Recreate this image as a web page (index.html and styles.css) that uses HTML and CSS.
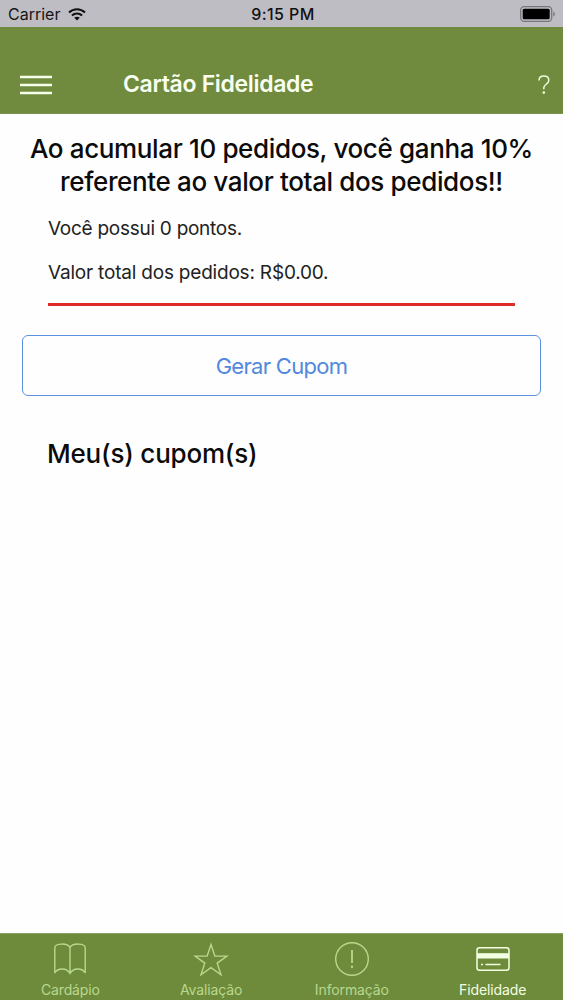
FILE: index.html
```html
<!DOCTYPE html>
<html lang="pt-BR">
<head>
<meta charset="utf-8">
<title>Cartão Fidelidade</title>
<link rel="stylesheet" href="styles.css">
</head>
<body>
<div class="app">
  <div class="status">
    <div class="carrier"><span>Carrier</span>
      <svg width="18" height="13" viewBox="0 0 18 13" fill="none" stroke="#111" stroke-width="2.1"><path d="M1 4.600C5.600.2 12.400.2 17 4.600M3.900 7.500c2.900-2.700 7.300-2.700 10.200 0"/><path d="M9 12.500 6.200 9.700c1.600-1.400 4-1.400 5.600 0z" fill="#111" stroke="none"/></svg>
    </div>
    <div class="clock">9:15 PM</div>
    <svg class="battery" width="36" height="16" viewBox="0 0 36 16"><rect x=".7" y=".7" width="31" height="14.600" rx="3.500" fill="none" stroke="#77777b" stroke-width="1.300"/><rect x="2.700" y="2.700" width="27" height="10.600" rx="1.500" fill="#000"/><path d="M33.300 5.500c2.100.8 2.100 4.200 0 5z" fill="#77777b"/></svg>
  </div>
  <header class="navbar">
    <svg class="menu" width="32" height="20" viewBox="0 0 32 20" stroke="#f6ffe9" stroke-width="2.300"><path d="M0 2h32M0 10h32M0 18h32"/></svg>
    <h1>Cartão Fidelidade</h1>
    <svg class="help" width="12" height="20" viewBox="0 0 12 20" fill="none" stroke="#effbdc" stroke-width="1.500"><path d="M1 5.500C1 2.500 3 1 5.800 1s5 1.600 5 4.200c0 4-5 4-5 7.600v1.400"/><circle cx="5.800" cy="17.600" r=".6" fill="#effbdc"/></svg>
  </header>
  <main>
    <h2 class="promo">Ao acumular 10 pedidos, você ganha 10%<br>referente ao valor total dos pedidos!!</h2>
    <section class="summary">
      <p class="points">Você possui 0 pontos.</p>
      <p class="total">Valor total dos pedidos: R$0.00.</p>
    </section>
    <button class="generate" type="button">Gerar Cupom</button>
    <h2 class="coupons">Meu(s) cupom(s)</h2>
  </main>
  <nav class="tabs">
    <div class="tab"><svg width="36" height="36" viewBox="0 0 36 36" fill="none" stroke="currentColor" stroke-width="1.400"><path d="M18 6.800C16 1.800 2.800 1.800 2.800 7v25c3-5.500 12-5.500 15.200.5C21.200 26.500 30.200 26.500 33.200 32V7C33.200 1.800 20 1.800 18 6.800zM18 6.800v25.700"/></svg><span class="label">Cardápio</span></div>
    <div class="tab"><svg width="36" height="36" viewBox="0 0 36 36" fill="none" stroke="currentColor" stroke-width="1.400"><path d="m18 3.500 3.900 11.600H34l-9.800 7 3.800 11.700-10-7.200-10 7.200 3.800-11.700-9.800-7h12.100z"/></svg><span class="label">Avaliação</span></div>
    <div class="tab"><svg width="36" height="36" viewBox="0 0 36 36" fill="none" stroke="currentColor" stroke-width="1.400"><circle cx="18" cy="18" r="16.300"/><path d="M18 9v13" stroke-width="1.800"/><circle cx="18" cy="25.800" r="1.200" fill="currentColor" stroke="none"/></svg><span class="label">Informação</span></div>
    <div class="tab active"><svg width="36" height="36" viewBox="0 0 36 36" fill="none" stroke="currentColor" stroke-width="1.500"><rect x="2" y="6.700" width="32" height="22.500" rx="2.500"/><path d="M2 12.200h32v5.300H2z" fill="currentColor" stroke="none"/><path d="M6 23.500h2M10.500 23.500h15" stroke-width="1.600"/></svg><span class="label">Fidelidade</span></div>
  </nav>
</div>
</body>
</html>
```
FILE: styles.css
```css
* { box-sizing: border-box; }
body { margin: 0; font-family: Inter, "Liberation Sans", sans-serif; color: #0b0b0b; }
svg { display: block; flex: none; }
h1, h2, p { margin: 0; white-space: nowrap; }
.app { height: 1000px; display: flex; flex-direction: column; background: #fefefe; }
.status { height: 27px; background: #bebdc3; display: grid; grid-template-columns: 1fr auto 1fr; align-items: center; padding: 1px 7px 0 8px; font-size: 16px; line-height: 26px; color: #151515; }
.carrier { display: flex; align-items: center; gap: 8px; }
.clock { margin-left: 2px; font-weight: 500; letter-spacing: .4px; color: #111; }
.battery { justify-self: end; }
.navbar { height: 87px; background: #708b3e; display: flex; align-items: flex-start; padding: 48px 13px 0 20px; border-bottom: 1px solid #7c944f; }
.navbar h1 { flex: 1; margin-left: 71px; margin-top: -5px; font-size: 23px; line-height: 28px; font-weight: 600; letter-spacing: -.33px; color: #f8fff0; }
main { flex: 1; display: flex; flex-direction: column; }
.promo { margin-top: 18px; text-align: center; font-size: 26px; line-height: 33px; font-weight: 500; letter-spacing: -.36px; }
.summary { margin: 17px 48px 0; padding-bottom: 16px; border-bottom: 3px solid #df2b27; font-size: 19px; line-height: 28px; color: #222; }
.points { letter-spacing: -.27px; }
.total { margin-top: 16px; letter-spacing: -.2px; }
.generate { margin: 29px 22px 0; height: 61px; padding: 1px 0 0; border: 1.500px solid #5c91df; border-radius: 6px; background: transparent; color: #5288dd; font: 400 22px/30px Inter, "Liberation Sans", sans-serif; letter-spacing: -.7px; }
.coupons { margin: 41px 47px 0; font-size: 26px; line-height: 34px; font-weight: 500; letter-spacing: -.2px; }
.tabs { height: 67px; background: #6e8b3b; border-top: 1px solid #8da162; display: grid; grid-template-columns: repeat(4, 1fr); }
.tab { display: flex; flex-direction: column; align-items: center; padding-top: 7px; color: #b8d88e; }
.label { margin-top: 4px; font-size: 14px; line-height: 18px; letter-spacing: -.12px; }
.active { color: #f3ffe3; }
```
